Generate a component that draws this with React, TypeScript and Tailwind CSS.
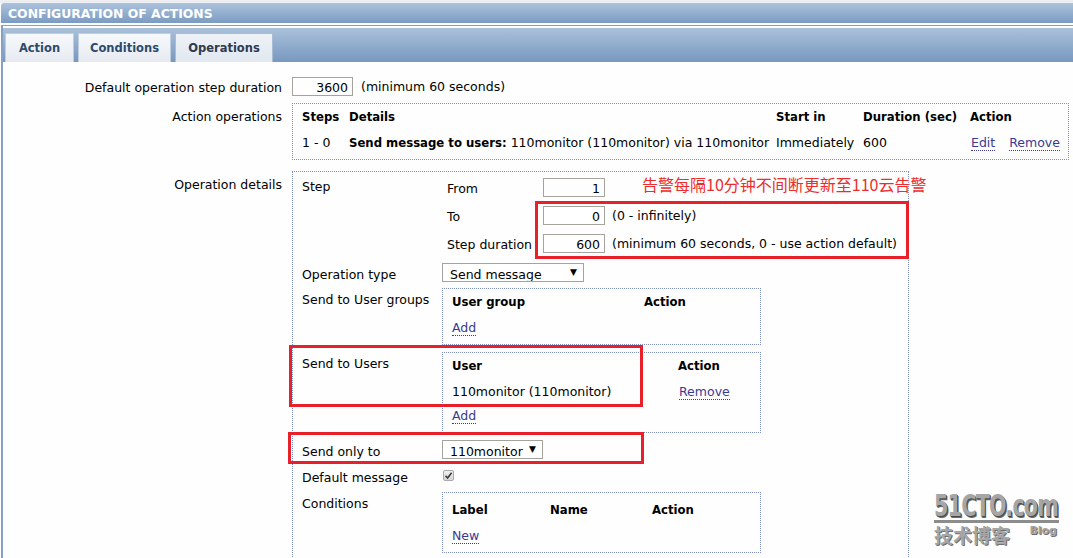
import React from "react";

const LINK = "inline-block text-[#3b3994] border-b border-dotted border-[#3b3994] leading-[14px]";
const BOX = "border border-dotted border-[#7f8fc8]";
const LABEL = "w-[140px] h-[19px] leading-[19px] pt-[2px] whitespace-nowrap";

function Field({ value, w }: { value: string; w: string }) {
  return (
    <div className={`${w} h-[19px] border border-[#a5a39b] bg-white text-right pr-[4px] pt-[1px] leading-[17px]`}>
      {value}
    </div>
  );
}

function Select({ label, w }: { label: string; w: string }) {
  return (
    <div className={`${w} h-[19px] border border-[#a5a39b] bg-white flex items-center justify-between pl-[7px] pr-[6px] pt-[3px] leading-[17px] overflow-hidden`}>
      <span>{label}</span>
      <span className="text-[9px] -mt-[3px]">▼</span>
    </div>
  );
}

function Tab({ label, w, active = false }: { label: string; w: string; active?: boolean }) {
  return (
    <div
      className={`${w} h-[29px] border border-b-0 flex items-center justify-center pt-[2px] font-bold text-[11.5px] ${
        active
          ? "border-[#a9bcd3] bg-linear-to-b from-[#eef2f7] to-[#e1e8f0] text-[#2f3a4f]"
          : "border-[#c0cedf] bg-linear-to-b from-[#f7f9fb] to-[#e6ebf1] text-[#2c4a6e]"
      }`}
    >
      {label}
    </div>
  );
}

function StepRow({ label, value, hint }: { label: string; value: string; hint?: string }) {
  return (
    <div className="flex items-center h-[19px]">
      <div className="w-[101px] pl-[5px] pt-[3px]">{label}</div>
      <Field value={value} w="w-[62px]" />
      {hint && <span className="ml-[7px] pt-[1px] whitespace-nowrap">{hint}</span>}
    </div>
  );
}

export default function App() {
  return (
    <div className="w-[1073px] h-[558px] overflow-hidden relative bg-[#fdfefd] text-black text-[12.5px] font-['DejaVu_Sans',Verdana,sans-serif]">
      <div className="h-[3px] bg-[#eceef1]" />
      <div className="ml-[1px] h-[20px] rounded-tl-[3px] bg-linear-to-b from-[#adc3dc] to-[#7a9bc1] pl-[7px] pt-[2px] flex items-center text-white font-bold text-[12.4px]">
        CONFIGURATION OF ACTIONS
      </div>

      <div className="ml-[1px] mt-[2px] border-l-2 border-t border-[#86a0c4] pt-[2px] h-[600px]">
        {/* tabs */}
        <div className="h-[34px] bg-linear-to-b from-[#abc1da] to-[#7798bf] flex items-end gap-[4px] pl-[2px]">
          <Tab label="Action" w="w-[69px]" />
          <Tab label="Conditions" w="w-[93px]" />
          <Tab label="Operations" w="w-[98px]" active />
        </div>

        <div className="pt-[15px]">
          {/* default duration */}
          <div className="flex items-center h-[19px]">
            <div className="w-[279px] text-right pt-[3px]">Default operation step duration</div>
            <div className="ml-[10px] flex items-center">
              <Field value="3600" w="w-[61px]" />
              <span className="ml-[8px] pt-[1px]">(minimum 60 seconds)</span>
            </div>
          </div>

          {/* action operations */}
          <div className="flex mt-[7px]">
            <div className="w-[279px] text-right pt-[6px] leading-[16px]">Action operations</div>
            <div className={`ml-[10px] w-[777px] ${BOX} pl-[9px] pb-[5px]`}>
              <div className="flex h-[25px] items-center pt-[3px] font-bold text-[11.7px]">
                <div className="w-[47px]">Steps</div>
                <div className="w-[427px]">Details</div>
                <div className="w-[87px]">Start in</div>
                <div className="w-[107px]">Duration (sec)</div>
                <div>Action</div>
              </div>
              <div className="flex h-[25px] items-center pt-[3px] whitespace-nowrap">
                <div className="w-[47px]">1 - 0</div>
                <div className="w-[427px]">
                  <b className="text-[11.7px]">Send message to users:</b> 110monitor (110monitor) via 110monitor
                </div>
                <div className="w-[87px]">Immediately</div>
                <div className="w-[107px]">600</div>
                <div className="flex gap-[14px] pl-[1px]">
                  <span className={LINK}>Edit</span>
                  <span className={LINK}>Remove</span>
                </div>
              </div>
            </div>
          </div>

          {/* operation details */}
          <div className="flex mt-[11px]">
            <div className="w-[279px] text-right pt-[6px] leading-[16px]">Operation details</div>
            <div className="ml-[10px] w-[617px] h-[420px] border-t border-l border-r border-dotted border-[#7f8fc8] pl-[9px] pt-[6px]">
              <div className="flex">
                <div className="w-[140px] h-[19px] leading-[17px]">Step</div>
                <div className="flex flex-col gap-[9px]">
                  <StepRow label="From" value="1" />
                  <StepRow label="To" value="0" hint="(0 - infinitely)" />
                  <StepRow label="Step duration" value="600" hint="(minimum 60 seconds, 0 - use action default)" />
                </div>
              </div>

              <div className="flex mt-[10px]">
                <div className={LABEL}>Operation type</div>
                <Select label="Send message" w="w-[142px]" />
              </div>

              <div className="flex mt-[6px]">
                <div className={LABEL}>Send to User groups</div>
                <div className={`w-[319px] ${BOX} pl-[9px] pb-[5px]`}>
                  <div className="flex h-[25px] items-center pt-[3px] font-bold text-[11.7px]">
                    <div className="w-[192px]">User group</div>
                    <div>Action</div>
                  </div>
                  <div className="flex h-[25px] items-center pt-[3px]">
                    <span className={LINK}>Add</span>
                  </div>
                </div>
              </div>

              <div className="flex mt-[7px]">
                <div className={LABEL}>Send to Users</div>
                <div className={`w-[319px] ${BOX} pl-[9px] pb-[4px]`}>
                  <div className="flex h-[25px] items-center pt-[3px] font-bold text-[11.7px]">
                    <div className="w-[226px]">User</div>
                    <div>Action</div>
                  </div>
                  <div className="flex h-[25px] items-center pt-[3px]">
                    <div className="w-[227px]">110monitor (110monitor)</div>
                    <span className={LINK}>Remove</span>
                  </div>
                  <div className="flex h-[25px] items-center pt-[2px]">
                    <span className={LINK}>Add</span>
                  </div>
                </div>
              </div>

              <div className="flex mt-[7px]">
                <div className={LABEL}>Send only to</div>
                <Select label="110monitor" w="w-[101px]" />
              </div>

              <div className="flex mt-[7px] h-[19px] items-center">
                <div className={LABEL}>Default message</div>
                <span className="ml-[1px] w-[11px] h-[11px] rounded-[2px] border border-[#a9a9a9] bg-linear-to-b from-[#f0f0f0] to-[#d6d6d6] flex items-center justify-center">
                  <svg width="9" height="9" viewBox="0 0 9 9">
                    <path d="M1.5 4.8 L3.6 7 L7.6 1.8" fill="none" stroke="#3a3a3a" strokeWidth="1.6" />
                  </svg>
                </span>
              </div>

              <div className="flex mt-[7px]">
                <div className={LABEL}>Conditions</div>
                <div className={`w-[319px] ${BOX} pl-[9px] pt-[3px] pb-[4px]`}>
                  <div className="flex h-[26px] items-center pt-[3px] font-bold text-[11.7px]">
                    <div className="w-[98px]">Label</div>
                    <div className="w-[102px]">Name</div>
                    <div>Action</div>
                  </div>
                  <div className="flex h-[26px] items-center pt-[3px]">
                    <span className={LINK}>New</span>
                  </div>
                </div>
              </div>
            </div>
          </div>
        </div>
      </div>

      {/* annotations */}
      <div className="absolute left-[642px] top-[174px] text-[16px] leading-[20px] text-[#ec2d2d] font-['Noto_Sans_CJK_SC',sans-serif] whitespace-nowrap">
        告警每隔10分钟不间断更新至110云告警
      </div>
      <div className="absolute left-[535px] top-[201px] w-[374px] h-[58px] border-[3px] border-[#e8202a]" />
      <div className="absolute left-[289px] top-[345px] w-[354px] h-[62px] border-[3px] border-[#e8202a]" />
      <div className="absolute left-[288px] top-[432px] w-[356px] h-[32px] border-[3px] border-[#e8202a]" />

      {/* watermark */}
      <div className="absolute left-[934px] top-[490px] w-[125px] text-[#a6a6a6]">
        <div className="h-[30px]">
          <div className="w-fit origin-left scale-x-[0.74] whitespace-nowrap font-black text-[31px] leading-[30px] tracking-[-1px] font-['DejaVu_Sans_Condensed','DejaVu_Sans',sans-serif] [text-shadow:1px_1px_0_#4a4a4a,2px_2px_0_#6a6a6a]">
            51CTO.com
          </div>
        </div>
        <div className="h-[3px] bg-[#8c8c8c]" />
        <div className="flex items-start justify-between">
          <span className="text-[19px] leading-[23px] font-bold font-['Noto_Sans_CJK_SC',sans-serif] [text-shadow:1px_1px_0_#707070]">技术博客</span>
          <span className="text-[11px] leading-[16px] font-bold font-['DejaVu_Sans',sans-serif] mr-[2px] [text-shadow:1px_1px_0_#707070]">Blog</span>
        </div>
      </div>
    </div>
  );
}
